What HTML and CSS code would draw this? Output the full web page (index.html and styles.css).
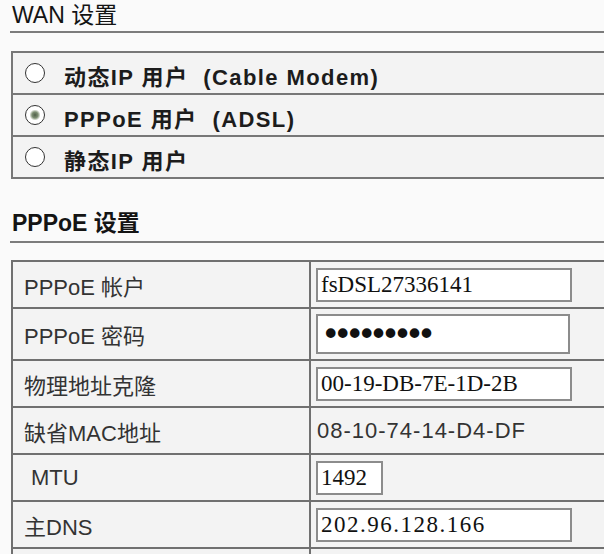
FILE: index.html
```html
<!DOCTYPE html>
<html lang="zh-CN">
<head>
    <meta charset="UTF-8">
    <title>WAN 设置</title>
    <link rel="stylesheet" href="styles.css">
</head>
<body>
<div class="page">
    <h2 class="section-title">WAN 设置</h2>
    <div class="radio-box">
        <label class="radio-row">
            <input type="radio" name="wan">
            <span class="radio-text">动态IP 用户  (Cable Modem)</span>
        </label>
        <label class="radio-row">
            <input type="radio" name="wan" checked>
            <span class="radio-text">PPPoE 用户  (ADSL)</span>
        </label>
        <label class="radio-row">
            <input type="radio" name="wan">
            <span class="radio-text">静态IP 用户</span>
        </label>
    </div>

    <h2 class="section-title bold">PPPoE 设置</h2>
    <div class="form-table">
        <div class="row">
            <div class="label">PPPoE 帐户</div>
            <div class="field"><input class="txt" type="text" value="fsDSL27336141"></div>
        </div>
        <div class="row">
            <div class="label">PPPoE 密码</div>
            <div class="field"><input class="txt pwd" type="password" value="123456789"></div>
        </div>
        <div class="row">
            <div class="label">物理地址克隆</div>
            <div class="field"><input class="txt" type="text" value="00-19-DB-7E-1D-2B"></div>
        </div>
        <div class="row">
            <div class="label">缺省MAC地址</div>
            <div class="field"><span class="plain">08-10-74-14-D4-DF</span></div>
        </div>
        <div class="row">
            <div class="label mtu">MTU</div>
            <div class="field"><input class="txt short" type="text" value="1492"></div>
        </div>
        <div class="row">
            <div class="label">主DNS</div>
            <div class="field"><input class="txt ip" type="text" value="202.96.128.166"></div>
        </div>
        <div class="row">
            <div class="label"></div>
            <div class="field"></div>
        </div>
    </div>
</div>
</body>
</html>
```

FILE: styles.css
```css
* {
    margin: 0;
    padding: 0;
    box-sizing: border-box;
}

html, body {
    background-color: #fafafa;
    overflow: hidden;
}

body {
    font-family: "Liberation Sans", "Noto Sans CJK SC", sans-serif;
    color: #1e1e1e;
}

.page {
    width: 640px;
    padding-left: 10px;
}

.section-title {
    font-size: 23px;
    font-weight: normal;
    line-height: 30px;
    padding-left: 2px;
    padding-bottom: 1px;
    color: #141414;
    border-bottom: 2px solid #7c7c7c;
}

.section-title.bold {
    font-weight: bold;
    margin-top: 29px;
    padding-bottom: 3px;
}

/* 连接方式 */
.radio-box {
    margin-top: 18px;
    margin-left: 1px;
    border-top: 2px solid #777;
    border-left: 2px solid #777;
    background-color: #f3f3f3;
}

.radio-row {
    display: flex;
    align-items: center;
    height: 42px;
    padding-left: 12px;
    border-bottom: 2px solid #777;
}

.radio-row input {
    appearance: none;
    -webkit-appearance: none;
    width: 20px;
    height: 20px;
    border: 1.5px solid #333;
    border-radius: 50%;
    background-color: #fff;
    margin-right: 19px;
    flex-shrink: 0;
}

.radio-row input:checked {
    background: radial-gradient(circle, #4f5f48 0, #7d8f72 3px, #c9d1c3 4.5px, #fff 5.5px);
}

.radio-text {
    font-size: 22px;
    font-weight: bold;
    letter-spacing: 1.4px;
    white-space: pre;
    padding-top: 4px;
    color: #1c1c1c;
}

/* PPPoE 表格 */
.form-table {
    margin-top: 17px;
    margin-left: 1px;
    border-top: 2px solid #707070;
    border-left: 2px solid #707070;
    background-color: #f3f3f3;
}

.row {
    display: grid;
    grid-template-columns: 298px 1fr;
    min-height: 47px;
    border-bottom: 2px solid #707070;
}

.label {
    display: flex;
    align-items: center;
    padding-left: 11px;
    font-size: 22px;
    color: #333;
    border-right: 2px solid #707070;
}

.label.mtu {
    padding-left: 18px;
}

.field {
    display: flex;
    align-items: center;
    padding: 5px 0 5px 5px;
}

.txt {
    width: 256px;
    height: 34px;
    border: 2px solid #8c8c8c;
    background-color: #fff;
    outline: none;
    padding: 0 3px;
    font-family: "Liberation Serif", serif;
    font-size: 23px;
    color: #111;
}

.txt.pwd {
    width: 254px;
    height: 40px;
    font-family: "DejaVu Sans", sans-serif;
    font-size: 33px;
    letter-spacing: -7.5px;
}

.txt.short {
    width: 67px;
}

.txt.ip {
    letter-spacing: 1.5px;
}

.plain {
    font-size: 22px;
    letter-spacing: 1px;
    color: #333;
    padding-left: 1px;
}
```
